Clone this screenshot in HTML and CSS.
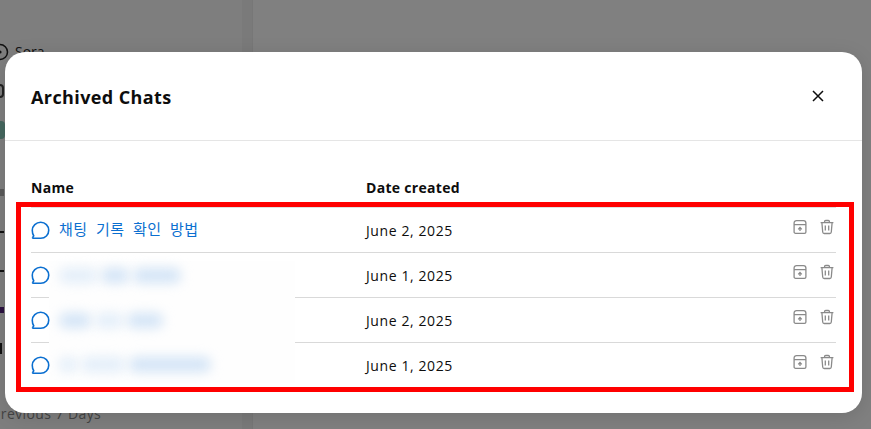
FILE: index.html
```html
<!DOCTYPE html>
<html lang="en">
  <head>
    <meta charset="UTF-8" />
    <title>Archived Chats</title>
    <link rel="stylesheet" href="styles.css">
  </head>
  <body>
    <div class="page">
      <div class="sidebar">
        <div class="side-sora">
          <svg class="sora-icon" viewBox="0 0 18 18" width="18" height="18"><circle cx="9" cy="9" r="7.5" fill="none" stroke="#111" stroke-width="1.5"/><circle cx="9" cy="9" r="1.6" fill="#111"/></svg>
          <span>Sora</span>
        </div>
        <div class="side-gpts"></div>
        <div class="side-thumb"></div>
        <div class="side-cut side-cut-label"><i></i></div>
        <div class="side-cut"><i></i></div>
        <div class="side-cut"><i></i></div>
        <div class="side-cut side-cut-purple"><i></i></div>
        <div class="side-cut side-cut-tall"><i></i></div>
        <div class="side-prev">Previous 7 Days</div>
      </div>
      <div class="rail"></div>
      <div class="main"></div>
    </div>

    <div class="modal">
      <div class="modal-head">
        <h1>Archived Chats</h1>
        <svg class="close-icon" viewBox="0 0 14 14" width="14" height="14"><path d="M2 2l10 10M12 2L2 12" stroke="#0d0d0d" stroke-width="1.5" fill="none"/></svg>
      </div>
      <div class="modal-body">
        <div class="cols">
          <div class="col-name">Name</div>
          <div class="col-date">Date created</div>
        </div>

        <div class="row">
          <div class="col-name chat">
            <svg class="bubble"><use href="#bubble"/></svg>
            <a class="title">채팅 기록 확인 방법</a>
          </div>
          <div class="col-date">June 2, 2025</div>
          <div class="acts"><svg class="act"><use href="#archive"/></svg><svg class="act"><use href="#trash"/></svg></div>
        </div>
        <div class="row">
          <div class="col-name chat">
            <svg class="bubble"><use href="#bubble"/></svg>
            <div class="smears">
              <span class="smear smear-faint" style="width: 38px"></span>
              <span class="smear" style="width: 28px"></span>
              <span class="smear" style="width: 48px"></span>
            </div>
          </div>
          <div class="col-date">June 1, 2025</div>
          <div class="acts"><svg class="act"><use href="#archive"/></svg><svg class="act"><use href="#trash"/></svg></div>
        </div>
        <div class="row">
          <div class="col-name chat">
            <svg class="bubble"><use href="#bubble"/></svg>
            <div class="smears">
              <span class="smear" style="width: 32px"></span>
              <span class="smear smear-faint" style="width: 28px"></span>
              <span class="smear" style="width: 36px"></span>
            </div>
          </div>
          <div class="col-date">June 2, 2025</div>
          <div class="acts"><svg class="act"><use href="#archive"/></svg><svg class="act"><use href="#trash"/></svg></div>
        </div>
        <div class="row">
          <div class="col-name chat">
            <svg class="bubble"><use href="#bubble"/></svg>
            <div class="smears smears-up">
              <span class="smear smear-faint" style="width: 18px"></span>
              <span class="smear smear-faint" style="width: 44px"></span>
              <span class="smear" style="width: 82px"></span>
            </div>
          </div>
          <div class="col-date">June 1, 2025</div>
          <div class="acts"><svg class="act"><use href="#archive"/></svg><svg class="act"><use href="#trash"/></svg></div>
        </div>
      </div>
      <div class="redact"></div>
    </div>

    <div class="highlight"></div>

    <svg class="defs" width="0" height="0">
      <symbol id="bubble" viewBox="0 0 18 18">
        <path d="M9.200 1.200c4.300 0 7.600 3.300 7.600 7.600s-3.300 7.600-7.600 7.600H2c-.5 0-.7-.5-.4-.9l1-1.500C1.600 12.600 1.200 10.800 1.200 8.800c0-4.200 3.700-7.600 8-7.600z" fill="none" stroke="#0b6fd0" stroke-width="1.500" stroke-linejoin="round"/>
      </symbol>
      <symbol id="archive" viewBox="0 0 16 16">
        <path d="M4.500 1.600h7c1.300 0 2.400 1.100 2.400 2.400v8.900c0 .8-.6 1.400-1.400 1.400h-9c-.8 0-1.400-.6-1.400-1.400V4c0-1.300 1.100-2.400 2.400-2.400zM2.100 5.700h11.800" fill="none" stroke="#8a8a8a" stroke-width="1.300"/>
        <path d="M8 12V8.800M6.200 10.400L8 8.500l1.800 1.900" fill="none" stroke="#8a8a8a" stroke-width="1.300"/>
      </symbol>
      <symbol id="trash" viewBox="0 0 16 16">
        <path d="M1.600 3.600h12.800M5.600 3.400V2.600c0-.7.400-1.100 1.100-1.100h2.600c.7 0 1.100.4 1.100 1.100v.8M2.900 3.800l.8 9.200c.1.900.7 1.500 1.500 1.500h5.600c.8 0 1.400-.6 1.500-1.500l.8-9.200M6.300 6.600v5M9.700 6.600v5" fill="none" stroke="#8a8a8a" stroke-width="1.300"/>
      </symbol>
    </svg>
  </body>
</html>
```
FILE: styles.css
```css
* {
  box-sizing: border-box;
}

body {
  margin: 0;
  height: 429px;
  overflow: hidden;
  background-color: #7f7f7f;
  font-family: "Open Sans", "Noto Sans", sans-serif;
  color: #0d0d0d;
}

.page {
  display: flex;
  height: 429px;
}

.sidebar {
  width: 242px;
  background-color: #7e7e7e;
  display: flex;
  flex-direction: column;
  padding-top: 42px;
  font-size: 14px;
}

.side-sora {
  display: flex;
  align-items: center;
  gap: 6px;
  margin-left: -9px;
  color: #111;
}

.side-gpts {
  width: 8px;
  height: 14px;
  margin: 23px 0 0 -4px;
  border-radius: 4px;
  border: 2px solid #222;
}

.side-thumb {
  width: 8px;
  height: 18px;
  margin: 23px 0 0 -3px;
  border-radius: 4px;
  background-color: #45675f;
}

/* ends of the sidebar titles that stick out left of the modal */
.side-cut {
  height: 39px;
  display: flex;
  align-items: center;
}

.side-cut i {
  display: block;
  width: 4px;
  height: 2px;
  background-color: #111;
}

.side-cut-label {
  margin-top: 34px;
}

.side-cut-label i {
  height: 7px;
  background-color: #5a5a5a;
}

.side-cut-purple i {
  height: 6px;
  background-color: #2b1140;
}

.side-cut-tall i {
  width: 2px;
  height: 11px;
}

.side-prev {
  color: #444;
  margin: 36px 0 0 -8px;
  letter-spacing: 0.4px;
  white-space: nowrap;
}

.rail {
  width: 11px;
  background-color: #7a7a7a;
  border-right: 1px solid #777;
}

.main {
  flex: 1;
  background-color: #808080;
}

.modal {
  position: absolute;
  left: 5px;
  top: 52px;
  width: 857px;
  height: 361px;
  background-color: #fff;
  border-radius: 20px;
  box-shadow: 0 4px 20px rgba(0, 0, 0, 0.12);
}

.modal-head {
  height: 89px;
  border-bottom: 1px solid #e5e5e5;
  display: flex;
  align-items: center;
  justify-content: space-between;
  padding: 0 37px 0 26px;
}

.modal-head h1 {
  margin: 0;
  padding-top: 2px;
  font-size: 18px;
  font-weight: 700;
  letter-spacing: 0.4px;
}

.modal-body {
  padding: 37px 26px 0 26px;
}

.cols {
  display: flex;
  height: 30px;
  font-size: 14px;
  font-weight: 700;
  letter-spacing: 0.3px;
  border-bottom: 1px solid #e0e0e0;
}

.row {
  display: flex;
  align-items: center;
  height: 45px;
  font-size: 14px;
  letter-spacing: 0.6px;
  border-bottom: 1px solid #d9d9d9;
}

.row:last-child {
  border-bottom: none;
}

.col-name {
  width: 335px;
}

.col-date {
  width: 300px;
}

.chat {
  display: flex;
  align-items: center;
  gap: 9px;
  position: relative;
  z-index: 2;
}

.bubble {
  width: 19px;
  height: 19px;
}

.title {
  color: #0b6fd0;
  font-family: "Noto Sans CJK KR", sans-serif;
  font-size: 15px;
  letter-spacing: 0.5px;
  word-spacing: 4.5px;
  margin-top: -3px;
}

.smears {
  display: flex;
  gap: 4px;
}

.smears-up {
  margin-top: -3px;
}

.smear {
  height: 15px;
  background-color: #d3e4f6;
  border-radius: 7px;
  filter: blur(6px);
}

.smear-faint {
  background-color: #e3eef9;
}

.acts {
  margin-left: auto;
  display: flex;
  gap: 11px;
  margin-right: 1px;
  margin-bottom: 7px;
}

.act {
  width: 16px;
  height: 16px;
}

/* blur patch left over the row lines */
.redact {
  position: absolute;
  left: 44px;
  top: 209px;
  width: 246px;
  height: 122px;
  background-color: #fefefe;
  z-index: 1;
}

.highlight {
  position: absolute;
  left: 16px;
  top: 202px;
  width: 838px;
  height: 190px;
  border: 5px solid #ff0000;
}

.defs {
  position: absolute;
}
```
